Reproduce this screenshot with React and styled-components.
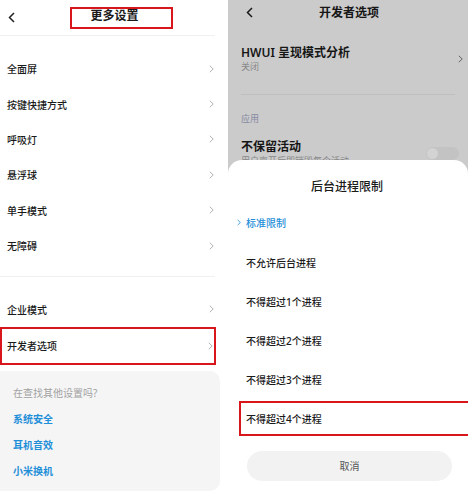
import React from "react";
import styled, { createGlobalStyle } from "styled-components";

const GlobalStyle = createGlobalStyle`
  body {
    margin: 0;
    background: #ffffff;
    font-family: "Noto Sans", "Noto Sans CJK SC", sans-serif;
  }
`;

const Page = styled.div`
  display: flex;
  width: 468px;
  height: 495px;
  overflow: hidden;
`;

/* ---------- left screen ---------- */

const LeftScreen = styled.div`
  width: 228px;
  display: flex;
  flex-direction: column;
  background: #ffffff;
`;

const LeftHeader = styled.div`
  display: grid;
  grid-template-columns: 60px 1fr 60px;
  align-items: center;
  height: 35px;
  margin-right: 13px;
  padding-left: 8px;
  border-bottom: 1px solid #f0f0f0;
`;

const TitleBox = styled.div`
  justify-self: center;
  width: 103px;
  height: 22px;
  box-sizing: border-box;
  border: 2px solid #d9161c;
  margin-left: 2px;
  display: flex;
  justify-content: center;
  padding-right: 14px;
  font-size: 12px;
  font-weight: 700;
  line-height: 13px;
  color: #1a1a1a;
`;

const Group = styled.div`
  padding: ${(p) => p.$pad};
  border-bottom: ${(p) => (p.$line ? "1px solid #f0f0f0" : "none")};
  margin-right: ${(p) => (p.$line ? "13px" : "0")};
`;

const Row = styled.div`
  display: flex;
  align-items: center;
  justify-content: space-between;
  box-sizing: border-box;
  height: ${(p) => (p.$marked ? "38px" : "35.4px")};
  margin-right: ${(p) => (p.$marked ? "12px" : p.$flush ? "0" : "13px")};
  padding: ${(p) => (p.$marked ? "0 1px 0 5px" : "0 1px 0 7px")};
  border: ${(p) => (p.$marked ? "2px solid #d9161c" : "none")};
  font-size: 10px;
  font-weight: 500;
  color: #1a1a1a;
`;

const Card = styled.div`
  margin-top: 6px;
  width: 220px;
  height: 120px;
  box-sizing: border-box;
  padding: 13px 13px 0;
  background: #f5f5f6;
  border-radius: 0 10px 10px 0;
`;

const Hint = styled.div`
  font-size: 10px;
  line-height: 18px;
  color: #a2a2a2;
`;

const Links = styled.div`
  margin-top: 4px;
  display: flex;
  flex-direction: column;
`;

const LinkText = styled.div`
  font-size: 10px;
  line-height: 26px;
  font-weight: 600;
  color: #1f8fd8;
`;

/* ---------- right screen ---------- */

const RightScreen = styled.div`
  position: relative;
  flex: 1;
  background: #cbcbcb;
  overflow: hidden;
  color: #161616;
`;

const RightHeader = styled.div`
  display: grid;
  grid-template-columns: 50px 1fr 50px;
  align-items: center;
  height: 24px;
  padding-left: 18px;
  font-size: 12px;
  font-weight: 700;
`;

const CenterTitle = styled.div`
  justify-self: center;
  margin-left: -16px;
`;

const SettingRow = styled.div`
  display: flex;
  align-items: center;
  justify-content: space-between;
  margin: ${(p) => p.$margin};
  padding: 0 5px 0 13px;
`;

const SettingTitle = styled.div`
  font-size: 12px;
  line-height: 16px;
  font-weight: 600;
`;

const SettingSub = styled.div`
  font-size: 9px;
  line-height: 12px;
  color: #888888;
  white-space: nowrap;
`;

const Divider = styled.div`
  margin: 21px 13px 0;
  height: 1px;
  background: #bfbfbf;
`;

const SectionLabel = styled.div`
  margin: 18px 13px 0;
  font-size: 9px;
  line-height: 12px;
  color: #868aa3;
`;

const Toggle = styled.div`
  width: 32px;
  height: 13px;
  margin-right: 4px;
  border-radius: 7px;
  background: #c3c3c3;
  display: flex;
  align-items: center;
  padding-left: 1px;
`;

const Knob = styled.div`
  width: 11px;
  height: 11px;
  border-radius: 50%;
  background: #d3d3d3;
`;

const Sheet = styled.div`
  position: absolute;
  left: 0;
  right: 0;
  top: 160px;
  bottom: 0;
  background: #ffffff;
  border-radius: 14px 14px 0 0;
  display: flex;
  flex-direction: column;
`;

const SheetTitle = styled.div`
  padding-top: 19px;
  text-align: center;
  margin-left: -2px;
  font-size: 12px;
  line-height: 16px;
  font-weight: 500;
  color: #1a1a1a;
`;

const Options = styled.div`
  margin-top: 8.4px;
  display: flex;
  flex-direction: column;
`;

const Option = styled.div`
  display: flex;
  align-items: center;
  box-sizing: border-box;
  height: ${(p) => (p.$marked ? "35px" : "39.2px")};
  margin: ${(p) => (p.$marked ? "2.1px -10px 2.1px 11px" : "0")};
  padding-left: ${(p) => (p.$marked ? "5px" : "18px")};
  border: ${(p) => (p.$marked ? "2px solid #d9161c" : "none")};
  font-size: 10px;
  font-weight: 500;
  color: ${(p) => (p.$active ? "#1f8fd8" : "#1a1a1a")};
`;

const Marker = styled.span`
  display: flex;
  width: 9px;
  margin-left: -9px;
`;

const CancelButton = styled.div`
  margin: 12.4px 16px 0 19px;
  height: 30px;
  border-radius: 15px;
  background: #f2f2f2;
  display: flex;
  align-items: center;
  justify-content: center;
  font-size: 10px;
  color: #555555;
`;

const Chevron = ({ color = "#b3b3b3", w = 5, h = 8 }) => (
  <svg width={w} height={h} viewBox="0 0 5 8">
    <polyline points="0.8,0.8 4.2,4 0.8,7.2" fill="none" stroke={color} strokeWidth="1" />
  </svg>
);

const Back = ({ color = "#222" }) => (
  <svg width="7" height="11" viewBox="0 0 7 11">
    <polyline points="6,1 1.5,5.5 6,10" fill="none" stroke={color} strokeWidth="1.5" />
  </svg>
);

const topItems = ["全面屏", "按键快捷方式", "呼吸灯", "悬浮球", "单手模式", "无障碍"];
const links = ["系统安全", "耳机音效", "小米换机"];
const options = [
  "标准限制",
  "不允许后台进程",
  "不得超过1个进程",
  "不得超过2个进程",
  "不得超过3个进程",
  "不得超过4个进程",
];

const App = () => {
  return (
    <>
      <GlobalStyle />
      <Page>
        <LeftScreen>
          <LeftHeader>
            <Back />
            <TitleBox>更多设置</TitleBox>
            <span />
          </LeftHeader>
          <Group $pad="15px 0 13px" $line>
            {topItems.map((t) => (
              <Row key={t} $flush>
                {t}
                <Chevron />
              </Row>
            ))}
          </Group>
          <Group $pad="14px 0 0">
            <Row>
              企业模式
              <Chevron />
            </Row>
            <Row $marked>
              开发者选项
              <Chevron />
            </Row>
          </Group>
          <Card>
            <Hint>在查找其他设置吗?</Hint>
            <Links>
              {links.map((l) => (
                <LinkText key={l}>{l}</LinkText>
              ))}
            </Links>
          </Card>
        </LeftScreen>

        <RightScreen>
          <RightHeader>
            <Back color="#1a1a1a" />
            <CenterTitle>开发者选项</CenterTitle>
            <span />
          </RightHeader>
          <SettingRow $margin="21px 0 0">
            <div>
              <SettingTitle>HWUI 呈现模式分析</SettingTitle>
              <SettingSub>关闭</SettingSub>
            </div>
            <Chevron color="#666" />
          </SettingRow>
          <Divider />
          <SectionLabel>应用</SectionLabel>
          <SettingRow $margin="14px 0 0">
            <div>
              <SettingTitle>不保留活动</SettingTitle>
              <SettingSub>用户离开后即销毁每个活动</SettingSub>
            </div>
            <Toggle>
              <Knob />
            </Toggle>
          </SettingRow>

          <Sheet>
            <SheetTitle>后台进程限制</SheetTitle>
            <Options>
              {options.map((o, i) => (
                <Option key={o} $active={i === 0} $marked={i === 5}>
                  {i === 0 && (
                    <Marker>
                      <Chevron color="#1f8fd8" w={4} h={7} />
                    </Marker>
                  )}
                  {o}
                </Option>
              ))}
            </Options>
            <CancelButton>取消</CancelButton>
          </Sheet>
        </RightScreen>
      </Page>
    </>
  );
};

export default App;
